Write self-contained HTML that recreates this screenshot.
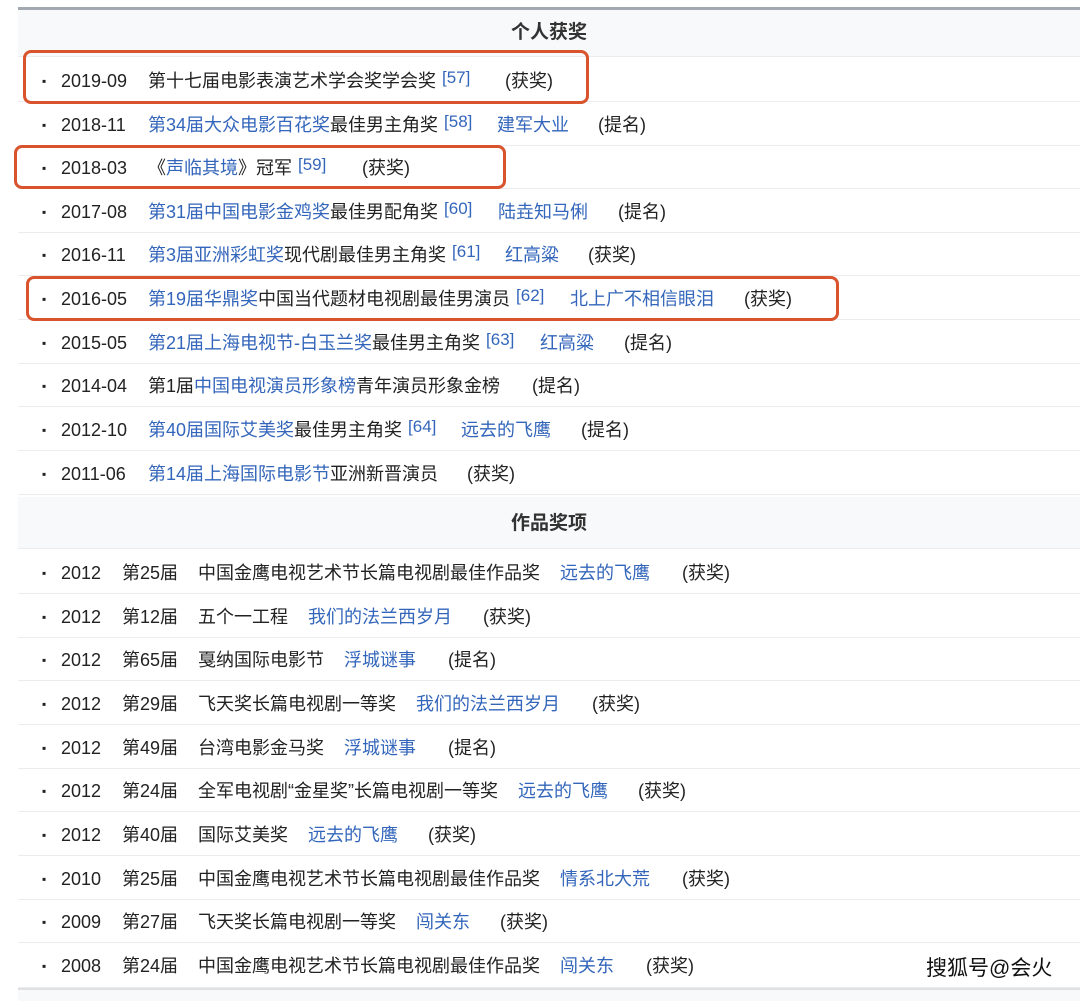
<!DOCTYPE html>
<html><head><meta charset="utf-8"><style>
body{margin:0;width:1080px;height:999px;background:#fff;position:relative;overflow:hidden;font-family:"Liberation Sans","Noto Sans CJK SC",sans-serif;color:#222;font-size:18px}
.top{position:absolute;left:18px;top:7px;width:1062px;height:3px;background:#a2a9b1}
.hd{position:absolute;left:18px;width:1062px;background:#f8f9fa;text-align:center;font-weight:bold;color:#333;box-sizing:border-box;border-bottom:1px solid #eaecf0;font-size:19px}
.row{position:absolute;left:18px;width:1062px;height:43.6px;border-bottom:1px solid #eaecf0;box-sizing:border-box;white-space:nowrap;line-height:46px}
.row span{position:absolute}
.b{left:24px;font-size:12px}
.a{color:#3366bb}
sup{font-size:17px;color:#3366bb;position:relative;top:-4px;vertical-align:baseline;margin-left:6px}
.box{position:absolute;border:3px solid #d9532c;border-radius:8px;box-sizing:border-box}
.wm{position:absolute;left:926px;top:952px;font-size:21px;color:#111;text-shadow:0 0 2px #fff,0 0 2px #fff}
</style></head><body>
<div class="top"></div>
<div class="hd" style="top:10px;height:47px;line-height:46px">个人获奖</div>

<div class="row" style="top:58px"><span class="b">▪</span><span style="left:43px">2019-09</span><span style="left:130px">第十七届电影表演艺术学会奖学会奖<sup>[57]</sup></span><span style="left:487px">(获奖)</span></div>
<div class="row" style="top:102px"><span class="b">▪</span><span style="left:43px">2018-11</span><span style="left:130px"><span class="a" style="position:static">第34届大众电影百花奖</span>最佳男主角奖<sup>[58]</sup></span><span class="a" style="left:479px">建军大业</span><span style="left:580px">(提名)</span></div>
<div class="row" style="top:145px"><span class="b">▪</span><span style="left:43px">2018-03</span><span style="left:130px">《<span class="a" style="position:static">声临其境</span>》冠军<sup>[59]</sup></span><span style="left:344px">(获奖)</span></div>
<div class="row" style="top:189px"><span class="b">▪</span><span style="left:43px">2017-08</span><span style="left:130px"><span class="a" style="position:static">第31届中国电影金鸡奖</span>最佳男配角奖<sup>[60]</sup></span><span class="a" style="left:480px">陆垚知马俐</span><span style="left:600px">(提名)</span></div>
<div class="row" style="top:232px"><span class="b">▪</span><span style="left:43px">2016-11</span><span style="left:130px"><span class="a" style="position:static">第3届亚洲彩虹奖</span>现代剧最佳男主角奖<sup>[61]</sup></span><span class="a" style="left:487px">红高粱</span><span style="left:570px">(获奖)</span></div>
<div class="row" style="top:276px"><span class="b">▪</span><span style="left:43px">2016-05</span><span style="left:130px"><span class="a" style="position:static">第19届华鼎奖</span>中国当代题材电视剧最佳男演员<sup>[62]</sup></span><span class="a" style="left:552px">北上广不相信眼泪</span><span style="left:726px">(获奖)</span></div>
<div class="row" style="top:320px"><span class="b">▪</span><span style="left:43px">2015-05</span><span style="left:130px"><span class="a" style="position:static">第21届上海电视节-白玉兰奖</span>最佳男主角奖<sup>[63]</sup></span><span class="a" style="left:522px">红高粱</span><span style="left:606px">(提名)</span></div>
<div class="row" style="top:363px"><span class="b">▪</span><span style="left:43px">2014-04</span><span style="left:130px">第1届<span class="a" style="position:static">中国电视演员形象榜</span>青年演员形象金榜</span><span style="left:514px">(提名)</span></div>
<div class="row" style="top:407px"><span class="b">▪</span><span style="left:43px">2012-10</span><span style="left:130px"><span class="a" style="position:static">第40届国际艾美奖</span>最佳男主角奖<sup>[64]</sup></span><span class="a" style="left:443px">远去的飞鹰</span><span style="left:563px">(提名)</span></div>
<div class="row" style="top:451px"><span class="b">▪</span><span style="left:43px">2011-06</span><span style="left:130px"><span class="a" style="position:static">第14届上海国际电影节</span>亚洲新晋演员</span><span style="left:449px">(获奖)</span></div>

<div class="hd" style="top:497px;height:52px;line-height:54px">作品奖项</div>

<div class="row" style="top:550px"><span class="b">▪</span><span style="left:43px">2012</span><span style="left:104px">第25届</span><span style="left:180px">中国金鹰电视艺术节长篇电视剧最佳作品奖</span><span class="a" style="left:542px">远去的飞鹰</span><span style="left:664px">(获奖)</span></div>
<div class="row" style="top:594px"><span class="b">▪</span><span style="left:43px">2012</span><span style="left:104px">第12届</span><span style="left:180px">五个一工程</span><span class="a" style="left:290px">我们的法兰西岁月</span><span style="left:465px">(获奖)</span></div>
<div class="row" style="top:637px"><span class="b">▪</span><span style="left:43px">2012</span><span style="left:104px">第65届</span><span style="left:180px">戛纳国际电影节</span><span class="a" style="left:326px">浮城谜事</span><span style="left:430px">(提名)</span></div>
<div class="row" style="top:681px"><span class="b">▪</span><span style="left:43px">2012</span><span style="left:104px">第29届</span><span style="left:180px">飞天奖长篇电视剧一等奖</span><span class="a" style="left:398px">我们的法兰西岁月</span><span style="left:574px">(获奖)</span></div>
<div class="row" style="top:725px"><span class="b">▪</span><span style="left:43px">2012</span><span style="left:104px">第49届</span><span style="left:180px">台湾电影金马奖</span><span class="a" style="left:326px">浮城谜事</span><span style="left:430px">(提名)</span></div>
<div class="row" style="top:768px"><span class="b">▪</span><span style="left:43px">2012</span><span style="left:104px">第24届</span><span style="left:180px">全军电视剧“金星奖”长篇电视剧一等奖</span><span class="a" style="left:500px">远去的飞鹰</span><span style="left:620px">(获奖)</span></div>
<div class="row" style="top:812px"><span class="b">▪</span><span style="left:43px">2012</span><span style="left:104px">第40届</span><span style="left:180px">国际艾美奖</span><span class="a" style="left:290px">远去的飞鹰</span><span style="left:410px">(获奖)</span></div>
<div class="row" style="top:856px"><span class="b">▪</span><span style="left:43px">2010</span><span style="left:104px">第25届</span><span style="left:180px">中国金鹰电视艺术节长篇电视剧最佳作品奖</span><span class="a" style="left:542px">情系北大荒</span><span style="left:664px">(获奖)</span></div>
<div class="row" style="top:899px"><span class="b">▪</span><span style="left:43px">2009</span><span style="left:104px">第27届</span><span style="left:180px">飞天奖长篇电视剧一等奖</span><span class="a" style="left:398px">闯关东</span><span style="left:482px">(获奖)</span></div>
<div class="row" style="top:943px;height:45px"><span class="b">▪</span><span style="left:43px">2008</span><span style="left:104px">第24届</span><span style="left:180px">中国金鹰电视艺术节长篇电视剧最佳作品奖</span><span class="a" style="left:542px">闯关东</span><span style="left:628px">(获奖)</span></div>
<div style="position:absolute;left:18px;top:988px;width:1062px;height:11px;background:#f8f9fa;border-top:2px solid #e0e0e0"></div>

<div class="box" style="left:23px;top:50px;width:566px;height:54px"></div>
<div class="box" style="left:14px;top:145px;width:492px;height:44px"></div>
<div class="box" style="left:26px;top:276px;width:813px;height:45px"></div>
<div class="wm">搜狐号@会火</div>
</body></html>
